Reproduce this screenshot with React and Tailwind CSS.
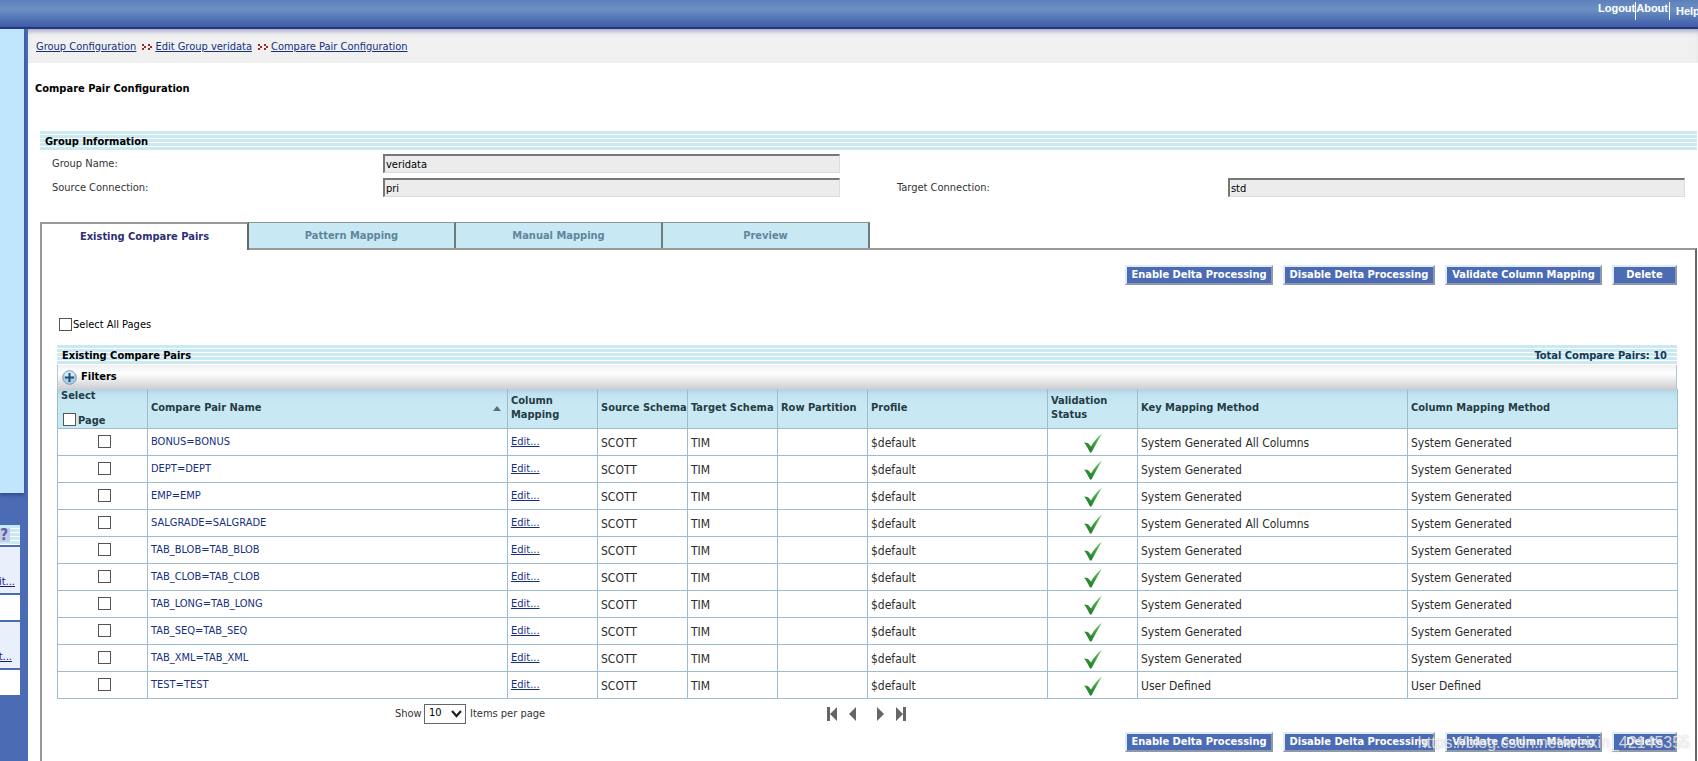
const pairs = [
  { name: 'BONUS=BONUS', keyMethod: 'System Generated All Columns', columnMethod: 'System Generated' },
  { name: 'DEPT=DEPT', keyMethod: 'System Generated', columnMethod: 'System Generated' },
  { name: 'EMP=EMP', keyMethod: 'System Generated', columnMethod: 'System Generated' },
  { name: 'SALGRADE=SALGRADE', keyMethod: 'System Generated All Columns', columnMethod: 'System Generated' },
  { name: 'TAB_BLOB=TAB_BLOB', keyMethod: 'System Generated', columnMethod: 'System Generated' },
  { name: 'TAB_CLOB=TAB_CLOB', keyMethod: 'System Generated', columnMethod: 'System Generated' },
  { name: 'TAB_LONG=TAB_LONG', keyMethod: 'System Generated', columnMethod: 'System Generated' },
  { name: 'TAB_SEQ=TAB_SEQ', keyMethod: 'System Generated', columnMethod: 'System Generated' },
  { name: 'TAB_XML=TAB_XML', keyMethod: 'System Generated', columnMethod: 'System Generated' },
  { name: 'TEST=TEST', keyMethod: 'User Defined', columnMethod: 'User Defined' }
];

const stripes =
  'bg-[repeating-linear-gradient(to_bottom,#cae9f0_0px,#cae9f0_3px,#ffffff_3px,#ffffff_4px)]';
const checkbox =
  'block size-[13px] shrink-0 appearance-none border border-[#555] bg-white checked:bg-[#4c6bb5]';
const th = 'border-x border-b border-[#9dbcd0] px-[3px] text-left align-middle font-bold leading-[14px]';
const td = 'h-[27px] border border-[#9dbcd0] px-[3px] pt-[2px] pb-0 align-middle';

function TopBar() {
  return (
    <header className="flex h-[29px] justify-end overflow-hidden border-b-2 border-[#25387c] bg-linear-to-b from-[#5d80ba] via-[#6b90c3] via-35% to-[#3f5ba8] font-['Liberation_Sans',sans-serif] text-[11px] font-bold text-white">
      <nav className="flex pt-[2px]">
        <a href="#logout" className="h-[18px] border-r border-white leading-[13px]">Logout</a>
        <a href="#about" className="h-[18px] border-r border-white pr-px leading-[13px]">About</a>
        <a href="#help" className="ml-[6px] w-[22px] overflow-hidden leading-[18px]">Help</a>
      </nav>
    </header>
  );
}

function Sidebar() {
  return (
    <aside className="w-7 shrink-0 bg-[#4c6bb5] text-[11px]">
      <div className="mr-1 h-[464px] bg-[#c0e6fe] shadow-[0_2px_4px_#2f4888]" />
      <div className="mt-8 mr-2 flex flex-col gap-[2px]">
        <div className={`flex h-5 items-center justify-start ${stripes}`}>
          <button
            type="button"
            className="flex h-[14px] w-[10px] items-center justify-end bg-[#c3c9e8] pr-[2px] text-[15px] font-bold text-[#5560a5]"
          >
            ?
          </button>
        </div>
        <div className="flex h-[46px] items-end justify-end overflow-hidden bg-[#eaf0fb] pr-[5px] pb-[3px]">
          <a href="#edit-source" className="text-[#1a1a80] underline">Edit...</a>
        </div>
        <div className="h-[25px] bg-white" />
        <div className="flex h-[46px] items-end justify-end overflow-hidden bg-[#eaf0fb] pr-2 pb-[3px]">
          <a href="#edit-target" className="text-[#1a1a80] underline">Edit...</a>
        </div>
        <div className="h-[25px] bg-white" />
      </div>
    </aside>
  );
}

function CrumbArrows() {
  return (
    <svg width="10" height="6" viewBox="0 0 10 6" className="mr-[3px] ml-[6px] fill-[#9c2a22]" aria-hidden="true">
      <path d="M0 0h2v2H0zM2 2h2v2H2zM0 4h2v2H0zM6 0h2v2H6zM8 2h2v2H8zM6 4h2v2H6z" />
    </svg>
  );
}

function Field({ id, label, value }) {
  return (
    <div className="flex items-center">
      <label htmlFor={id} className="w-[42%] pt-[2px] text-[11px] text-[#333]">{label}</label>
      <input
        id={id}
        readOnly
        defaultValue={value}
        className="h-[19px] min-w-0 flex-1 border-t-2 border-r border-b border-l-2 border-t-[#777] border-r-[#ddd] border-b-[#ddd] border-l-[#777] bg-[#ececec] px-px text-[11px] text-black outline-none"
      />
    </div>
  );
}

function Tab({ label, active }) {
  if (active) {
    return (
      <button
        type="button"
        className="relative -mb-[2px] h-[28px] w-[209px] border-t-2 border-r-2 border-l-2 border-t-[#999] border-r-[#666] border-l-[#999] bg-white text-[#2f2f73]"
      >
        {label}
      </button>
    );
  }
  return (
    <button
      type="button"
      className="h-[26px] w-[207px] border-t border-r-2 border-t-[#8a9699] border-r-[#6f7a7d] bg-[#c8e9f3] pt-[2px] text-[#5f86a0]"
    >
      {label}
    </button>
  );
}

function ActionButton({ label, className }) {
  return (
    <button
      type="button"
      className={`h-5 border-2 border-t-[#dcecf8] border-r-[#8e98a8] border-b-[#8e98a8] border-l-[#dcecf8] bg-[#4c6bb5] text-[11px] leading-4 font-bold whitespace-nowrap text-white ${className}`}
    >
      {label}
    </button>
  );
}

function Actions() {
  return (
    <div className="flex justify-end gap-[10px]">
      <ActionButton label="Enable Delta Processing" className="w-[148px]" />
      <ActionButton label="Disable Delta Processing" className="w-[152px]" />
      <ActionButton label="Validate Column Mapping" className="w-[157px]" />
      <ActionButton label="Delete" className="w-[65px]" />
    </div>
  );
}

function CheckMark() {
  return (
    <svg width="20" height="20" viewBox="0 0 20 20" className="mx-auto block" aria-label="Valid">
      <defs>
        <linearGradient id="check" x1="1" y1="0" x2="0.3" y2="1">
          <stop offset="0" stopColor="#8fce8c" />
          <stop offset="0.5" stopColor="#3da541" />
          <stop offset="1" stopColor="#237a2a" />
        </linearGradient>
      </defs>
      <path d="M1 9.5 L5 10 L8 13.5 C11 8.5 14.5 4 19 0.5 C15.5 6.5 12 13 8.5 19.5 L7 19.5 C5 15.5 3.5 12.5 1 9.5Z" fill="url(#check)" />
    </svg>
  );
}

function PairsTable() {
  return (
    <table className="w-full table-fixed border-collapse text-[12px] text-[#2c2c2c]">
      <colgroup>
        <col className="w-[90px]" />
        <col className="w-[360px]" />
        <col className="w-[90px]" />
        <col className="w-[90px]" />
        <col className="w-[90px]" />
        <col className="w-[90px]" />
        <col className="w-[180px]" />
        <col className="w-[90px]" />
        <col className="w-[270px]" />
        <col className="w-[270px]" />
      </colgroup>
      <thead>
        <tr className="h-[39px] bg-linear-to-b from-[#b4d0e0] via-[#c2e4f2] via-15% to-[#c8e9f3] to-40% text-[11px] text-[#263c44]">
          <th className={th}>
            <div className="flex flex-col gap-[9px]">
              <span>Select</span>
              <label className="flex items-center gap-[2px] pl-[2px]">
                <input type="checkbox" className={checkbox} />
                <span className="pt-[3px] leading-[12px]">Page</span>
              </label>
            </div>
          </th>
          <th className={th}>
            <div className="flex items-center justify-between pr-[3px]">
              Compare Pair Name
              <svg width="8" height="5" viewBox="0 0 8 5" className="fill-[#55707a]" aria-hidden="true">
                <path d="M4 0L8 5H0z" />
              </svg>
            </div>
          </th>
          <th className={th}>Column Mapping</th>
          <th className={`${th} whitespace-nowrap`}>Source Schema</th>
          <th className={`${th} whitespace-nowrap`}>Target Schema</th>
          <th className={`${th} whitespace-nowrap`}>Row Partition</th>
          <th className={th}>Profile</th>
          <th className={th}>Validation Status</th>
          <th className={th}>Key Mapping Method</th>
          <th className={th}>Column Mapping Method</th>
        </tr>
      </thead>
      <tbody>
        {pairs.map((pair) => (
          <tr key={pair.name}>
            <td className="h-[27px] border border-[#9dbcd0] py-0 pr-0 pl-1 align-middle">
              <input type="checkbox" aria-label={`Select ${pair.name}`} className={`${checkbox} mx-auto`} />
            </td>
            <td className={td}>
              <a href="#pair" className="block text-[11px] text-[#14307f]">{pair.name}</a>
            </td>
            <td className={td}>
              <a href="#mapping" className="block text-[11px] text-[#14307f] underline">Edit...</a>
            </td>
            <td className={td}>SCOTT</td>
            <td className={td}>TIM</td>
            <td className={td} />
            <td className={td}>$default</td>
            <td className={td}>
              <CheckMark />
            </td>
            <td className={td}>{pair.keyMethod}</td>
            <td className={td}>{pair.columnMethod}</td>
          </tr>
        ))}
      </tbody>
    </table>
  );
}

function Pager() {
  return (
    <div className="flex h-[30px] items-center pl-[338px] text-[11px] text-[#333]">
      <div className="flex w-[432px] items-center">
        <label htmlFor="page-size" className="w-[29px] pt-[2px]">Show</label>
        <div className="relative">
          <select
            id="page-size"
            defaultValue="10"
            className="block h-5 w-[42px] appearance-none border border-[#666] bg-white pl-1 text-[11px] text-black"
          >
            <option>10</option>
            <option>25</option>
            <option>50</option>
          </select>
          <svg
            width="11"
            height="8"
            viewBox="0 0 11 8"
            className="pointer-events-none absolute top-[6px] right-1"
            aria-hidden="true"
          >
            <path d="M1 1l4.5 5L10 1" fill="none" stroke="#222" strokeWidth="2.2" />
          </svg>
        </div>
        <span className="pt-[2px] pl-1">Items per page</span>
      </div>
      <div className="flex items-center gap-3 text-[#666]">
        <button type="button" aria-label="First page">
          <svg width="10" height="14" viewBox="0 0 10 14" fill="currentColor"><path d="M0 0h3v14H0zM10 0v14L3 7z" /></svg>
        </button>
        <button type="button" aria-label="Previous page" className="mr-[9px]">
          <svg width="7" height="14" viewBox="0 0 7 14" fill="currentColor"><path d="M7 0v14L0 7z" /></svg>
        </button>
        <button type="button" aria-label="Next page">
          <svg width="7" height="14" viewBox="0 0 7 14" fill="currentColor"><path d="M0 0v14l7-7z" /></svg>
        </button>
        <button type="button" aria-label="Last page">
          <svg width="10" height="14" viewBox="0 0 10 14" fill="currentColor"><path d="M7 0h3v14H7zM0 0v14l7-7z" /></svg>
        </button>
      </div>
    </div>
  );
}

export default function App() {
  return (
    <div className="relative flex min-h-screen flex-col bg-white font-['DejaVu_Sans_Condensed','Noto_Sans',sans-serif] text-[11px] text-black">
      <TopBar />
      <div className="flex flex-1">
        <Sidebar />
        <main className="flex min-w-0 flex-1 flex-col">
          <nav className="flex h-[34px] items-center bg-[#f0f0f0] pt-[2px] pl-2 text-[#14307f] shadow-[inset_0_5px_5px_-3px_#9a9fc0]">
            <a href="#group" className="underline">Group Configuration</a>
            <CrumbArrows />
            <a href="#edit-group" className="underline">Edit Group veridata</a>
            <CrumbArrows />
            <a href="#compare-pair" className="underline">Compare Pair Configuration</a>
          </nav>

          <h1 className="mt-[17px] pl-[7px] leading-[18px] font-bold">Compare Pair Configuration</h1>

          <div className="mt-[33px] mr-px ml-3 flex flex-1 flex-col">
            <h2 className={`h-[19px] pl-[5px] leading-[21px] font-bold ${stripes}`}>Group Information</h2>
            <div className="mt-1 grid grid-cols-2 gap-x-[57px] gap-y-[5px] px-3">
              <Field id="group-name" label="Group Name:" value="veridata" />
              <div />
              <Field id="source" label="Source Connection:" value="pri" />
              <Field id="target" label="Target Connection:" value="std" />
            </div>

            <div className="mt-[25px] flex text-[11px] font-bold">
              <Tab label="Existing Compare Pairs" active />
              <Tab label="Pattern Mapping" />
              <Tab label="Manual Mapping" />
              <Tab label="Preview" />
            </div>

            <section className="flex-1 border-x-2 border-t-2 border-t-[#999] border-r-[#666] border-l-[#999] pt-[15px] pr-[18px] pl-[15px]">
              <Actions />
              <label className="mt-[30px] flex h-[18px] items-center gap-px pl-[2px]">
                <input type="checkbox" className={checkbox} />
                <span className="pt-[3px]">Select All Pages</span>
              </label>

              <div className={`mt-[12px] flex h-5 justify-between pr-[10px] pl-[5px] leading-[21px] font-bold ${stripes}`}>
                <h2>Existing Compare Pairs</h2>
                <span className="text-[#123a5c]">Total Compare Pairs: 10</span>
              </div>
              <div className="flex h-6 items-center border-x border-[#b5c8d2] bg-linear-to-b from-[#f0f0f0] via-white via-35% to-[#cfcfd2] pl-1">
                <button type="button" className="flex items-center gap-1 font-bold">
                  <svg width="15" height="15" viewBox="0 0 15 15" aria-hidden="true">
                    <circle cx="7.5" cy="7.5" r="6.8" fill="#a9cbe3" stroke="#7d9db5" />
                    <ellipse cx="7.5" cy="4.5" rx="5" ry="3" fill="#d5e8f4" />
                    <path d="M7.5 3v9M3 7.5h9" stroke="#1d4f7c" strokeWidth="2" />
                  </svg>
                  Filters
                </button>
              </div>
              <PairsTable />
              <Pager />
              <div className="mt-[3px] pb-2">
                <Actions />
              </div>
            </section>
          </div>
        </main>
      </div>
      <span className="pointer-events-none absolute right-2 bottom-2 font-['Liberation_Sans',sans-serif] text-[16px] leading-5 text-white/70 [text-shadow:0_0_2px_#8888]">
        https://blog.csdn.net/weixin_42145355
      </span>
    </div>
  );
}
